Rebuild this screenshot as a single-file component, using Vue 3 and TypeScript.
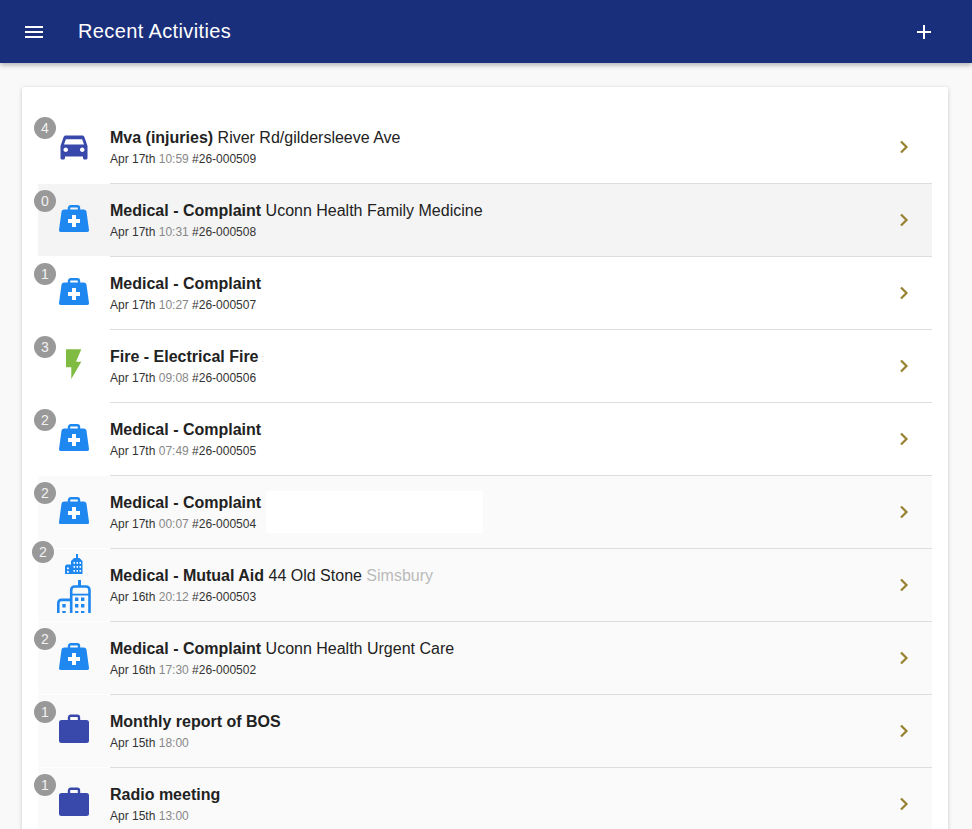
<script setup lang="ts">
type IconName = 'car' | 'bag' | 'bolt' | 'city' | 'case';

interface Activity {
  badge: number;
  icon: IconName;
  title: string;
  place?: string;
  town?: string;
  date: string;
  time: string;
  num?: string;
  tone?: 'hover' | 'soft';
  hidden?: boolean;
  trace?: boolean;
}

const activities: Activity[] = [
  { badge: 4, icon: 'car', title: 'Mva (injuries)', place: 'River Rd/gildersleeve Ave', date: 'Apr 17th', time: '10:59', num: '#26-000509' },
  { badge: 0, icon: 'bag', title: 'Medical - Complaint', place: 'Uconn Health Family Medicine', date: 'Apr 17th', time: '10:31', num: '#26-000508', tone: 'hover' },
  { badge: 1, icon: 'bag', title: 'Medical - Complaint', date: 'Apr 17th', time: '10:27', num: '#26-000507' },
  { badge: 3, icon: 'bolt', title: 'Fire - Electrical Fire', date: 'Apr 17th', time: '09:08', num: '#26-000506', trace: true },
  { badge: 2, icon: 'bag', title: 'Medical - Complaint', date: 'Apr 17th', time: '07:49', num: '#26-000505' },
  { badge: 2, icon: 'bag', title: 'Medical - Complaint', date: 'Apr 17th', time: '00:07', num: '#26-000504', tone: 'soft', hidden: true },
  { badge: 2, icon: 'city', title: 'Medical - Mutual Aid', place: '44 Old Stone', town: 'Simsbury', date: 'Apr 16th', time: '20:12', num: '#26-000503', tone: 'soft' },
  { badge: 2, icon: 'bag', title: 'Medical - Complaint', place: 'Uconn Health Urgent Care', date: 'Apr 16th', time: '17:30', num: '#26-000502', tone: 'soft' },
  { badge: 1, icon: 'case', title: 'Monthly report of BOS', date: 'Apr 15th', time: '18:00', tone: 'soft' },
  { badge: 1, icon: 'case', title: 'Radio meeting', date: 'Apr 15th', time: '13:00', tone: 'soft' },
];
</script>

<template>
  <div class="page">
    <header class="toolbar">
      <button class="tool-btn" aria-label="Menu">
        <svg width="18" height="12" viewBox="0 0 18 12"><path d="M0 1h18M0 6h18M0 11h18" stroke="#fff" stroke-width="2" /></svg>
      </button>
      <h1 class="toolbar-title">Recent Activities</h1>
      <button class="tool-btn" aria-label="Add">
        <svg width="14" height="14" viewBox="0 0 14 14"><path d="M7 0v14M0 7h14" stroke="#fff" stroke-width="2" /></svg>
      </button>
    </header>

    <main class="content">
      <section class="card">
        <div v-for="item in activities" :key="item.time + item.date" class="row" :class="item.tone">
          <span class="badge" :class="{ raised: item.icon === 'city' }">{{ item.badge }}</span>

          <div class="icon-col">
            <svg v-if="item.icon === 'car'" class="car" width="36" height="36" viewBox="0 0 24 24" fill="#3949ab">
              <path d="M18.92 6.01C18.72 5.42 18.16 5 17.5 5h-11c-.66 0-1.21.42-1.42 1.01L3 12v8c0 .55.45 1 1 1h1c.55 0 1-.45 1-1v-1h12v1c0 .55.45 1 1 1h1c.55 0 1-.45 1-1v-8l-2.08-5.99zM6.5 16c-.83 0-1.5-.67-1.5-1.5S5.67 13 6.5 13s1.5.67 1.5 1.5S7.33 16 6.5 16zm11 0c-.83 0-1.5-.67-1.5-1.5s.67-1.5 1.500-1.500 1.500.67 1.500 1.500-.67 1.500-1.500 1.500zM5.300 11l1.300-3.500h10.800l1.300 3.500z" />
            </svg>

            <svg v-else-if="item.icon === 'bag'" width="36" height="36" viewBox="0 0 36 36">
              <path d="M13 9V6c0-1 .7-1.800 1.800-1.800h6.400c1.100 0 1.800.8 1.800 1.800v3" fill="none" stroke="#1e88f0" stroke-width="2.400" />
              <path d="M8.500 7.500h19c1.600 0 2.700.9 3 2.300L33 28c.2 1.300-.6 2-1.800 2H4.800c-1.200 0-2-.7-1.800-2L5.500 9.800c.3-1.400 1.400-2.300 3-2.300z" fill="#1e88f0" />
              <path d="M12 19h12M18 13v12" stroke="#fff" stroke-width="4" />
            </svg>

            <svg v-else-if="item.icon === 'bolt'" width="36" height="36" viewBox="0 0 36 36">
              <path d="M10 1.300h15.300L20 13.700h5.300L15.300 31V19.300H10z" fill="#7fbc41" />
            </svg>

            <svg v-else-if="item.icon === 'case'" width="36" height="36" viewBox="0 0 36 36">
              <path d="M13 8V4.500c0-1 .7-1.700 1.700-1.700h6.600c1 0 1.700.7 1.700 1.700V8" fill="none" stroke="#3949ab" stroke-width="2.400" />
              <rect x="3" y="7" width="30" height="23" rx="2.500" fill="#3949ab" />
            </svg>

            <div v-else class="city">
              <svg width="18" height="20" viewBox="0 0 18 20">
                <path d="M11 0h2v4h1.500L17.500 7v13H0v-8l1.500-1.500H6V7l3-3h2z" fill="#1e88f0" />
                <path d="M8.500 8H10v1.700H8.500zM11.500 8H13v1.700h-1.500zM14.500 8H16v1.700h-1.500zM8.500 12H10v1.700H8.500zM11.500 12H13v1.700h-1.500zM14.500 12H16v1.700h-1.500zM8.500 16H10v1.700H8.500zM11.500 16H13v1.700h-1.500zM14.500 16H16v1.700h-1.500zM2 13.500h1.800v1.700H2zM2 17h1.800v1.700H2z" fill="#fff" />
              </svg>
              <svg width="34" height="33" viewBox="0 0 34 33">
                <path d="M22.500 0v7" stroke="#1e88f0" stroke-width="3" />
                <path d="M14.200 33V10c0-2 1.500-3.500 3.500-3.500h11.300c2 0 3.500 1.500 3.500 3.500v23" fill="none" stroke="#1e88f0" stroke-width="2.600" />
                <path d="M14 14.600h19" stroke="#1e88f0" stroke-width="1.800" />
                <path d="M14 19.900H4.500c-2 0-3.200 1.200-3.200 3.200V33" fill="none" stroke="#1e88f0" stroke-width="2.600" />
                <path d="M18 17.500h3.400V21H18zM24 17.500h3.400V21H24zM18 24h3.400v3.400H18zM24 24h3.400v3.400H24zM18 31h3.400v2H18zM24 31h3.400v2H24zM5.300 24h3.400v3.400H5.300zM5.300 31h3.400v2H5.300z" fill="#1e88f0" />
              </svg>
            </div>
          </div>

          <div class="row-body">
            <div class="texts">
              <div class="title">
                <strong>{{ item.title }}</strong>
                <template v-if="item.place">{{ ' ' + item.place }}</template>
                <span v-if="item.town" class="town">{{ ' ' + item.town }}</span>
                <span v-if="item.trace" class="trace">{{ ' :' }}</span>
              </div>
              <div class="meta">
                {{ item.date + ' ' }}<span class="time">{{ item.time }}</span>
                <template v-if="item.num">{{ ' ' + item.num }}</template>
              </div>
            </div>
            <svg class="chevron" width="10" height="14" viewBox="0 0 10 14">
              <path d="M2 1.500L7.500 7 2 12.500" fill="none" stroke="#97802f" stroke-width="2.200" />
            </svg>
          </div>

          <div v-if="item.hidden" class="blank"></div>
        </div>
      </section>
    </main>
  </div>
</template>

<style>
html,
body {
  margin: 0;
  background: #f9f9f9;
}
</style>

<style scoped>
.page {
  height: 100vh;
  overflow: hidden;
  display: flex;
  flex-direction: column;
  font-family: "Liberation Sans", Arial, sans-serif;
  color: #222;
}

.toolbar {
  position: relative;
  z-index: 2;
  flex: none;
  height: 63px;
  display: flex;
  align-items: center;
  background: #1a2f7c;
  box-shadow: 0 2px 5px rgba(0, 0, 0, 0.3);
  color: #fff;
}

.tool-btn {
  width: 68px;
  height: 63px;
  padding: 0;
  border: none;
  background: none;
  display: flex;
  align-items: center;
  justify-content: center;
}

.tool-btn svg {
  display: block;
}

.toolbar-title {
  flex: 1;
  margin: 0 0 0 10px;
  font-size: 20px;
  font-weight: 400;
  letter-spacing: 0.38px;
}

.toolbar .tool-btn:last-child {
  width: 96px;
}

.content {
  flex: 1;
  padding: 24px 24px 0 22px;
}

.card {
  background: #fff;
  padding: 24px 16px 0;
  border-radius: 2px;
  box-shadow: 0 1px 4px rgba(0, 0, 0, 0.2);
}

.row {
  position: relative;
  height: 73px;
  display: flex;
}

.row.hover {
  background: #f4f4f4;
}

.row.soft {
  background: #fafafa;
}

.badge {
  position: absolute;
  left: -4px;
  top: 6px;
  z-index: 1;
  width: 22px;
  height: 22px;
  border-radius: 50%;
  background: #999;
  color: #f2f2f2;
  font-size: 14px;
  line-height: 22px;
  text-align: center;
}

.badge.raised {
  left: -6px;
  top: -8px;
}

.icon-col {
  flex: none;
  width: 72px;
  box-sizing: border-box;
  border-bottom: 1px solid #fff;
  display: flex;
  align-items: center;
  justify-content: center;
}

.car {
  margin-top: -3px;
}

.city {
  display: flex;
  flex-direction: column;
  align-items: center;
  gap: 6px;
  margin-top: -3px;
}

.city svg {
  display: block;
}

.row-body {
  flex: 1;
  box-sizing: border-box;
  border-bottom: 1px solid #ddd;
  display: flex;
  align-items: center;
  padding-right: 23px;
}

.texts {
  flex: 1;
  min-width: 0;
}

.title {
  font-size: 16px;
  line-height: 20px;
  white-space: nowrap;
}

.town {
  color: #bbb;
}

.trace {
  color: #ddd;
  font-size: 10px;
  line-height: 0;
}

.meta {
  margin-top: 3px;
  font-size: 12px;
  line-height: 16px;
  color: #333;
}

.time {
  color: #888;
}

.chevron {
  flex: none;
}

.blank {
  position: absolute;
  left: 228px;
  top: 15px;
  width: 217px;
  height: 42px;
  background: #fff;
}
</style>
